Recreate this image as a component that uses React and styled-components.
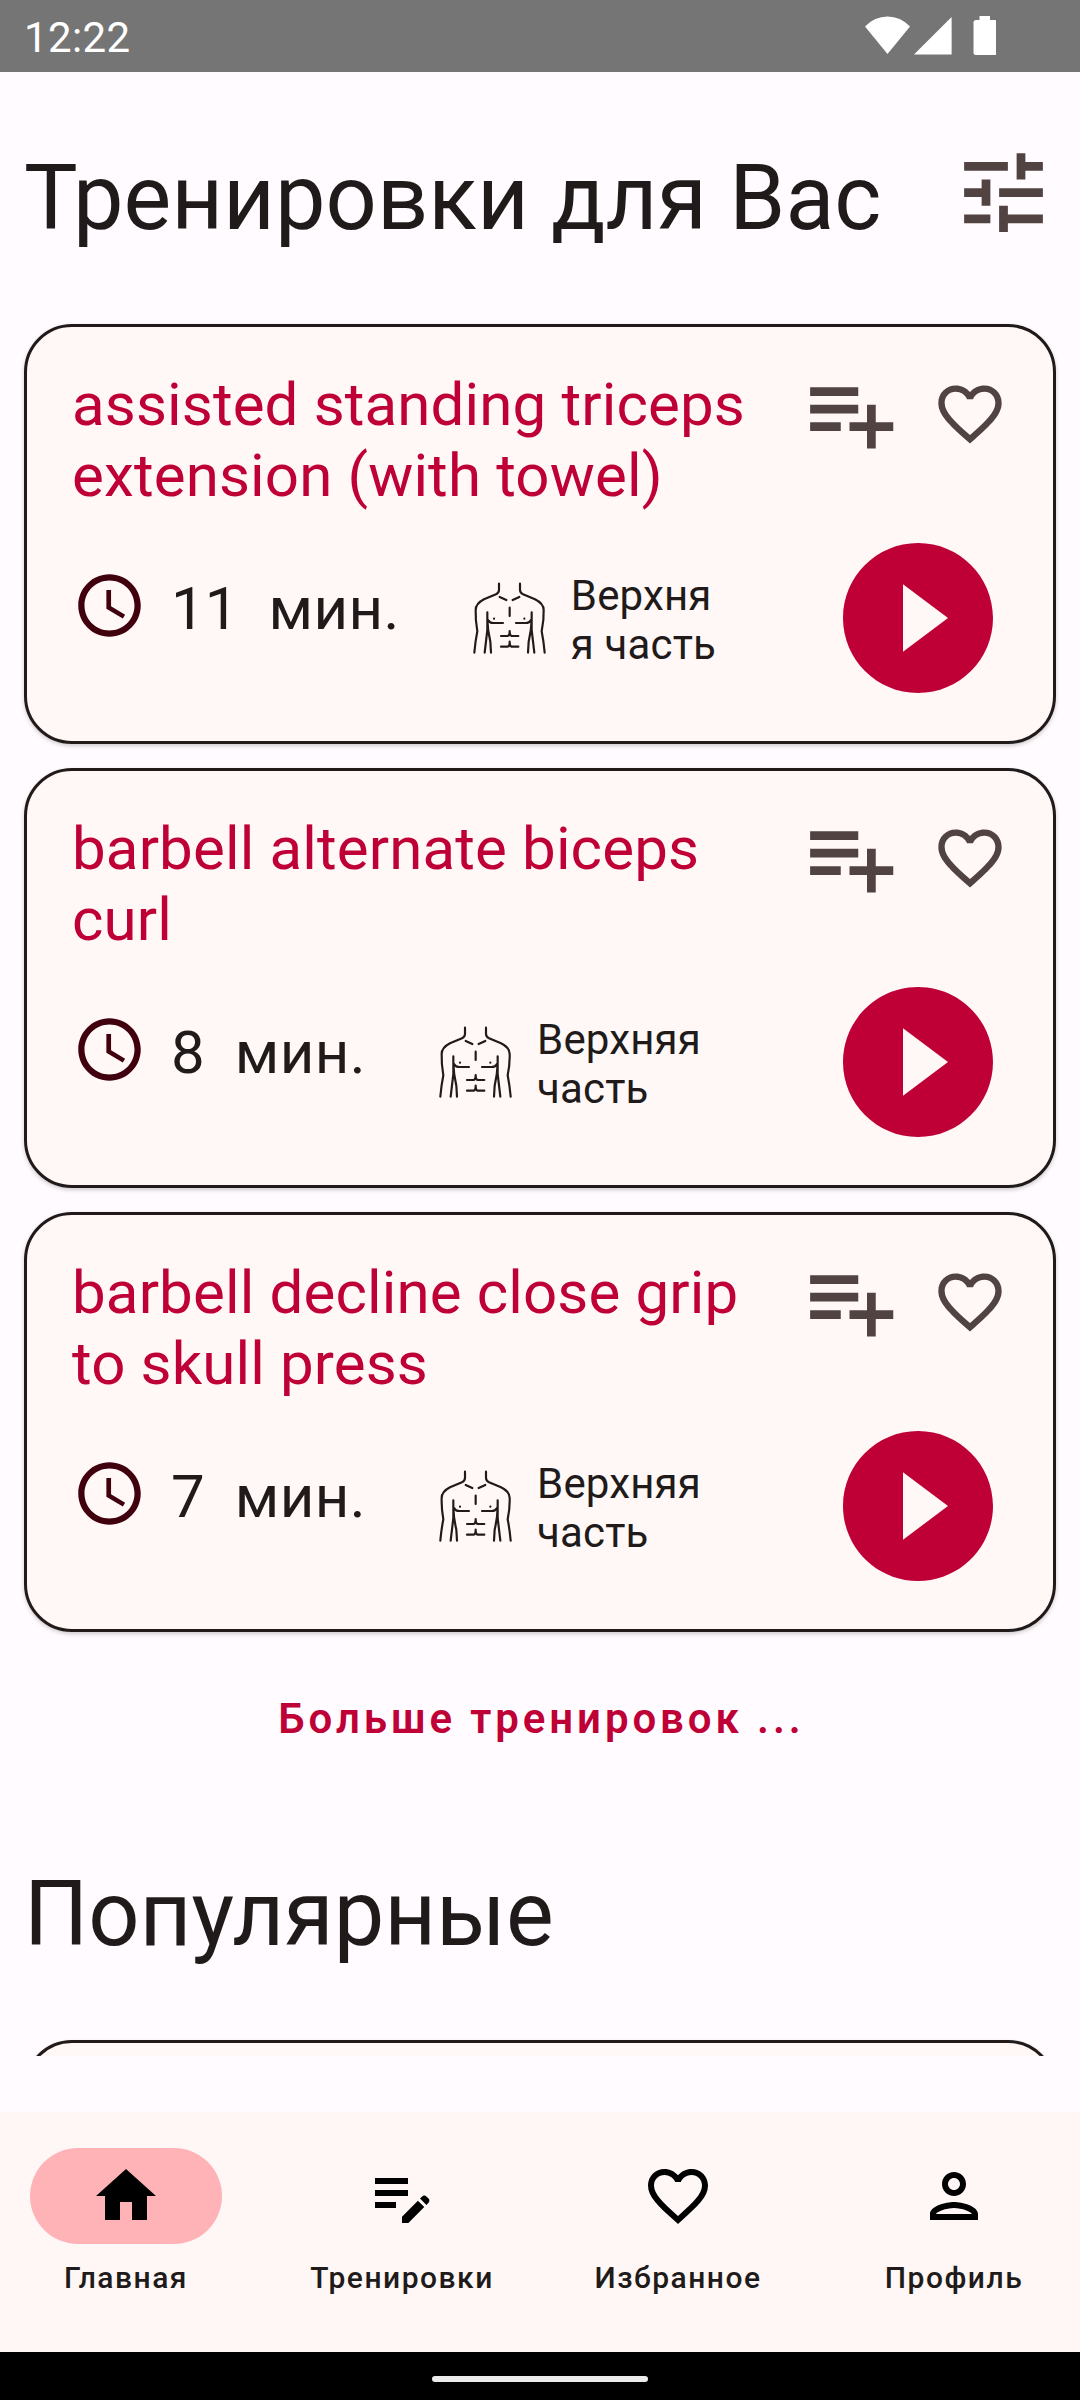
import React from 'react';
import styled, { createGlobalStyle } from 'styled-components';

const color = {
  bg: '#fffbff',
  surface: '#fff8f6',
  nav: '#fff7f5',
  text: '#201a1a',
  primary: '#be0036',
  icon: '#524343',
  clock: '#40000d',
  pill: '#ffb3b7',
};

const GlobalStyle = createGlobalStyle`
  * { box-sizing: border-box; }
  body { margin: 0; background: ${color.bg}; }
`;

const Screen = styled.div`
  width: 1080px;
  height: 2400px;
  display: flex;
  flex-direction: column;
  overflow: hidden;
  background: ${color.bg};
  color: ${color.text};
  font-family: Roboto, 'Noto Sans', sans-serif;
`;

const StatusBar = styled.header`
  height: 72px;
  flex: none;
  display: flex;
  align-items: center;
  justify-content: space-between;
  padding: 0 84px 0 24px;
  background: #757575;
  color: #fff;
`;

const Clock = styled.span`
  font-size: 42px;
  line-height: 50px;
  padding-top: 4px;
  letter-spacing: 0.4px;
`;

const StatusIcons = styled.svg`
  display: block;
  width: 132px;
  height: 40px;
`;

const Content = styled.main`
  height: 1984px;
  flex: none;
  overflow: hidden;
  padding: 0 24px;
`;

const SectionHead = styled.div`
  display: flex;
  align-items: center;
  justify-content: space-between;
  height: 252px;
  padding-bottom: 12px;
`;

const Heading = styled.h1`
  margin: 0;
  font-size: 90px;
  font-weight: 400;
  line-height: 106px;
  padding-top: 13px;
  white-space: nowrap;
`;

const Icon = styled.svg`
  display: block;
  flex: none;
  width: ${(p) => p.$size}px;
  height: ${(p) => p.$size}px;
  fill: ${(p) => p.$color || color.icon};
`;

const CardList = styled.div`
  display: flex;
  flex-direction: column;
  gap: 24px;
`;

const Card = styled.article`
  height: 420px;
  border: 3px solid ${color.text};
  border-radius: 48px;
  background: ${color.surface};
  box-shadow: 0 2px 4px rgba(0, 0, 0, 0.2);
  padding: 42px 45px 33px;
  display: flex;
  flex-direction: column;
  justify-content: space-between;
`;

const CardTop = styled.div`
  display: flex;
  align-items: flex-start;
`;

const CardTitle = styled.h2`
  margin: 0;
  width: 725px;
  font-size: 60px;
  font-weight: 400;
  line-height: 71px;
  letter-spacing: 0.15px;
  color: ${color.primary};
`;

const CardActions = styled.div`
  display: flex;
  align-items: center;
  gap: 30px;
  margin-top: -8px;
`;

const CardBottom = styled.div`
  display: flex;
  align-items: flex-start;
  height: 180px;
`;

const Duration = styled.div`
  display: flex;
  align-items: center;
  margin-top: 39px;
`;

const Minutes = styled.span`
  font-size: 60px;
  line-height: 70px;
  letter-spacing: ${(p) => p.$spacing || 0}px;
  margin-left: ${(p) => p.$gap}px;
  padding-top: 7px;
`;

const BodyPart = styled.div`
  display: flex;
  align-items: flex-start;
  margin: 43px 0 0 72px;
`;

const Torso = styled.svg`
  display: block;
  flex: none;
  width: 75px;
  height: 75px;
  margin-top: 11px;
  fill: none;
  stroke: ${color.text};
  stroke-width: 6.5;
  stroke-linecap: round;
  stroke-linejoin: round;
`;

const PartName = styled.span`
  width: ${(p) => p.$width}px;
  margin-left: 24px;
  font-size: 42px;
  line-height: 49px;
  letter-spacing: 0.15px;
  word-break: ${(p) => (p.$breakWord ? 'break-all' : 'normal')};
`;

const Play = styled.div`
  margin-left: auto;
`;

const MoreLink = styled.div`
  height: 156px;
  padding: 62px 0 0 3px;
  text-align: center;
  font-size: 42px;
  font-weight: 600;
  line-height: 49px;
  letter-spacing: 3.9px;
  color: ${color.primary};
`;

const NavBar = styled.nav`
  height: 240px;
  flex: none;
  margin-top: 56px;
  display: flex;
  gap: 24px;
  background: ${color.nav};
`;

const NavItem = styled.div`
  flex: 1;
  display: flex;
  flex-direction: column;
  align-items: center;
  padding-top: 36px;
`;

const NavPill = styled.div`
  width: 192px;
  height: 96px;
  border-radius: 48px;
  display: flex;
  align-items: center;
  justify-content: center;
  background: ${(p) => (p.$active ? color.pill : 'transparent')};
`;

const NavLabel = styled.span`
  margin-top: 16px;
  font-size: 30px;
  font-weight: 500;
  line-height: 36px;
  letter-spacing: 1.5px;
`;

const GestureArea = styled.footer`
  height: 48px;
  flex: none;
  display: flex;
  align-items: center;
  justify-content: center;
  padding-top: 6px;
  background: #000;
`;

const GestureHandle = styled.div`
  width: 216px;
  height: 6px;
  border-radius: 3px;
  background: #ececec;
`;

const paths = {
  tune: 'M3 17v2h6v-2H3zM3 5v2h10V5H3zm10 16v-2h8v-2h-8v-2h-2v6h2zM7 9v2H3v2h4v2h2V9H7zm14 4v-2H11v2h10zm-6-4h2V7h4V5h-4V3h-2v6z',
  playlistAdd: 'M14 10H3v2h11v-2zm0-4H3v2h11V6zm4 8v-4h-2v4h-4v2h4v4h2v-4h4v-2h-4zM3 16h7v-2H3v2z',
  heart: 'M16.5 3c-1.74 0-3.41.81-4.5 2.09C10.91 3.81 9.24 3 7.5 3 4.42 3 2 5.42 2 8.5c0 3.78 3.4 6.86 8.55 11.54L12 21.35l1.45-1.32C18.6 15.36 22 12.28 22 8.5 22 5.42 19.58 3 16.5 3zm-4.4 15.55l-.1.1-.1-.1C7.14 14.24 4 11.39 4 8.5 4 6.5 5.5 5 7.5 5c1.54 0 3.04.99 3.57 2.36h1.87C13.46 5.99 14.96 5 16.5 5c2 0 3.5 1.5 3.5 3.5 0 2.89-3.14 5.74-7.9 10.05z',
  time: 'M11.99 2C6.47 2 2 6.48 2 12s4.47 10 9.99 10C17.52 22 22 17.52 22 12S17.52 2 11.99 2zM12 20c-4.42 0-8-3.58-8-8s3.58-8 8-8 8 3.58 8 8-3.58 8-8 8zM12.5 7H11v6l5.25 3.15.75-1.23-4.5-2.67z',
  play: 'M12 2C6.48 2 2 6.48 2 12s4.48 10 10 10 10-4.48 10-10S17.52 2 12 2zm-2 14.5v-9l6 4.5-6 4.5z',
  home: 'M10 20v-6h4v6h5v-8h3L12 3 2 12h3v8z',
  editNote: 'M3 10h11v2H3v-2zm0-2h11V6H3v2zm0 8h7v-2H3v2zm15.01-3.13.71-.71c.39-.39 1.02-.39 1.41 0l.71.71c.39.39.39 1.02 0 1.41l-.71.71-2.12-2.12zm-.71.71-5.3 5.3V21h2.12l5.3-5.3-2.12-2.12z',
  person: 'M12 6c1.1 0 2 .9 2 2s-.9 2-2 2-2-.9-2-2 .9-2 2-2m0 10c2.7 0 5.8 1.29 6 2H6c.23-.72 3.31-2 6-2m0-12C9.79 4 8 5.79 8 8s1.79 4 4 4 4-1.79 4-4-1.79-4-4-4zm0 10c-2.67 0-8 1.34-8 4v2h16v-2c0-2.66-5.33-4-8-4z',
};

const Glyph = ({ name, size, tint }) => (
  <Icon viewBox="0 0 24 24" $size={size} $color={tint}>
    <path d={paths[name]} />
  </Icon>
);

const TorsoIcon = () => (
  <Torso viewBox="36 36 225 225">
    <path d="M117 41V60Q117 68 108 73L72 88Q47 101 47 120Q46 150 52 184Q46 214 43 248" />
    <path d="M180 41V60Q180 68 189 73L225 88Q251 101 251 120Q252 150 245 184Q251 214 254 248" />
    <path d="M82 127V180L74 248M82 150Q83 180 91 215L93 248M84 150Q88 159 100 159H129" />
    <path d="M215 127V180L223 248M215 150Q214 180 206 215L204 248M213 150Q209 159 197 159H168" />
    <path d="M119 81L139 90M178 81L158 90M149 113V138" />
    <path d="M123 198H143Q149 197 149 183Q149 197 155 198H175M123 230H143Q149 229 149 215Q149 229 155 230H175" />
    <path d="M102 146h.1M193 146h.1" />
  </Torso>
);

const workouts = [
  { title: 'assisted standing triceps extension (with towel)', minutes: 11, partWidth: 152, breakWord: true },
  { title: 'barbell alternate biceps curl', minutes: 8, partWidth: 180 },
  { title: 'barbell decline close grip to skull press', minutes: 7, partWidth: 180 },
];

const tabs = [
  { label: 'Главная', icon: 'home', active: true },
  { label: 'Тренировки', icon: 'editNote' },
  { label: 'Избранное', icon: 'heart' },
  { label: 'Профиль', icon: 'person' },
];

const WorkoutCard = ({ title, minutes, partWidth, breakWord }) => (
  <Card>
    <CardTop>
      <CardTitle>{title}</CardTitle>
      <CardActions>
        <Glyph name="playlistAdd" size={105} />
        <Glyph name="heart" size={76} />
      </CardActions>
    </CardTop>
    <CardBottom>
      <Duration>
        <Glyph name="time" size={75} tint={color.clock} />
        <Minutes $gap={24}>{minutes}</Minutes>
        <Minutes $gap={30} $spacing={0.45}>мин.</Minutes>
      </Duration>
      <BodyPart>
        <TorsoIcon />
        <PartName $width={partWidth} $breakWord={breakWord}>Верхняя часть</PartName>
      </BodyPart>
      <Play>
        <Glyph name="play" size={180} tint={color.primary} />
      </Play>
    </CardBottom>
  </Card>
);

export default function App() {
  return (
    <>
      <GlobalStyle />
      <Screen>
        <StatusBar>
          <Clock>12:22</Clock>
          <StatusIcons viewBox="0 0 132 40" fill="#fff">
            <path d="M1 10.500Q10.500 .5 23.500 .5T46 10.500L23.500 38Z" />
            <path d="M50 38.500L87.600 1V38.500Z" />
            <path d="M115.500 0h10.500v4h4.500q2.500 0 2.500 2.500v30q0 2.500-2.500 2.500h-18.500q-2.500 0-2.500-2.500v-30q0-2.500 2.500-2.500h3.500Z" />
          </StatusIcons>
        </StatusBar>
        <Content>
          <SectionHead>
            <Heading>Тренировки для Вас</Heading>
            <Glyph name="tune" size={105} />
          </SectionHead>
          <CardList>
            {workouts.map((w) => (
              <WorkoutCard key={w.title} {...w} />
            ))}
          </CardList>
          <MoreLink>Больше тренировок ...</MoreLink>
          <SectionHead>
            <Heading>Популярные</Heading>
          </SectionHead>
          <Card />
        </Content>
        <NavBar>
          {tabs.map((t) => (
            <NavItem key={t.label}>
              <NavPill $active={t.active}>
                <Glyph name={t.icon} size={72} tint="#000" />
              </NavPill>
              <NavLabel>{t.label}</NavLabel>
            </NavItem>
          ))}
        </NavBar>
        <GestureArea>
          <GestureHandle />
        </GestureArea>
      </Screen>
    </>
  );
}
